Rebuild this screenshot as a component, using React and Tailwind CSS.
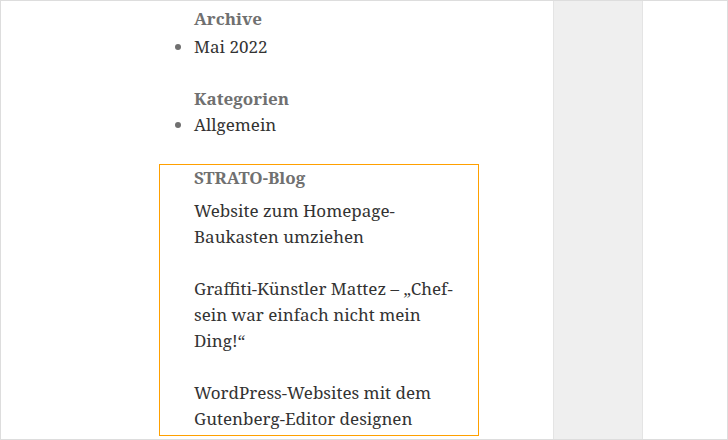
export default function App() {
  const font = { fontFamily: '"Noto Serif", "DejaVu Serif", "Liberation Serif", serif' };
  return (
    <div className="w-[728px] h-[440px] border border-[#dddddd] bg-white flex overflow-hidden" style={font}>
      {/* main content column */}
      <div className="w-[552px] pl-[158px] pt-[5px] text-[17px] leading-[26px] text-[#333333]">
        <section className="w-[320px] pl-[35px]">
          <h2 className="font-bold text-[#707070] mb-[2px]">Archive</h2>
          <ul className="list-disc marker:text-[#707070]">
            <li>Mai 2022</li>
          </ul>
        </section>

        <section className="w-[320px] pl-[35px] mt-[26px]">
          <h2 className="font-bold text-[#707070]">Kategorien</h2>
          <ul className="list-disc marker:text-[#707070]">
            <li>Allgemein</li>
          </ul>
        </section>

        {/* highlighted RSS widget */}
        <section className="w-[320px] mt-[26px] border border-[#ffa000] pl-[34px] pr-[12px] pb-[3px]">
          <h2 className="font-bold text-[#707070] mb-[7px]">STRATO-Blog</h2>
          <ul className="flex flex-col gap-[26px]">
            <li>Website zum Homepage-Baukasten umziehen</li>
            <li>Graffiti-Künstler Mattez – „Chef-sein war einfach nicht mein Ding!“</li>
            <li>WordPress-Websites mit dem Gutenberg-Editor designen</li>
          </ul>
        </section>
      </div>

      {/* sidebar strip */}
      <div className="w-[90px] h-full bg-[#efefef] border-x border-[#e4e4e4]" />

      <div className="flex-1" />
    </div>
  );
}
